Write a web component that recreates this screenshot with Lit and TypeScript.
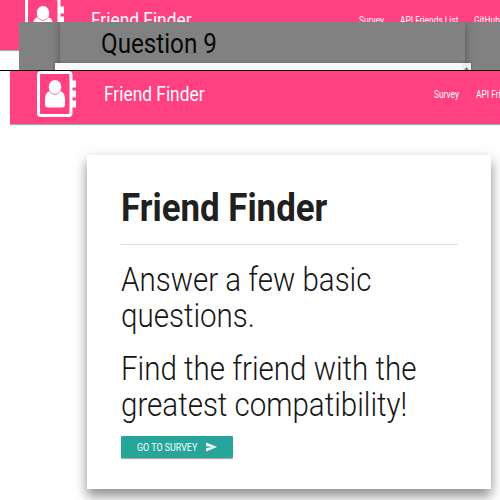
import { LitElement, html, css } from "lit";
import { customElement, property } from "lit/decorators.js";

/** Horizontally condensed Roboto label. */
@customElement("slim-text")
class SlimText extends LitElement {
  @property({ type: Number }) ratio = 0.83;
  static styles = css`
    :host { display: block; white-space: nowrap; }
    .label { display: inline-block; transform-origin: 0 50%; }
  `;
  render() {
    return html`<span class="label" style="transform:scaleX(${this.ratio})"><slot></slot></span>`;
  }
}

@customElement("nav-bar")
class NavBar extends LitElement {
  static styles = css`
    :host {
      display: flex; box-sizing: border-box; height: 53px; width: 520px;
      background: #ff4081; color: #fff; flex: none;
      box-shadow: 0 1px 1px rgba(0, 70, 50, 0.4);
    }
    .logo { display: block; width: 39px; height: 47px; margin-left: 27.5px; flex: none; }
    .brand { width: var(--brand-width, 303.5px); margin-left: 27.5px; font-size: 20px; line-height: 47px; flex: none; }
    .links { display: flex; font-size: 10px; line-height: 47px; }
    .survey { width: 41.3px; margin-left: 27px; }
    .api { width: 74.5px; }
  `;
  render() {
    return html`
      <svg class="logo" viewBox="0 0 39 47">
        <rect x="1.5" y="1.5" width="32.5" height="43" rx="2.5" fill="none" stroke="#fff" stroke-width="3" />
        <path fill="#fff" d="M35 9.5h4v7H35zM35 19.5h4v7H35zM35 29.5h4v7H35z" />
        <ellipse cx="18" cy="16" rx="6.3" ry="7" fill="#fff" />
        <path fill="#fff" d="M12.2 20.2C9 21.5 8 25 8 29v4.5Q8 36.5 11 36.5H25Q28 36.5 28 33.5V29C28 25 27 21.5 23.8 20.2Q18 27.5 12.2 20.2Z" />
      </svg>
      <slim-text class="brand" ratio="0.867">Friend Finder</slim-text>
      <div class="links">
        <slim-text class="survey" ratio="0.84">Survey</slim-text>
        <slim-text class="api" ratio="0.84">API Friends List</slim-text>
        <slim-text ratio="0.84">GitHub</slim-text>
      </div>
    `;
  }
}

@customElement("app-root")
class AppRoot extends LitElement {
  static styles = css`
    :host {
      display: flex; flex-direction: column; width: 500px; height: 500px; overflow: hidden;
      background: #fff; font-family: Roboto, "Liberation Sans", sans-serif; color: #1b1b1b;
    }
    .top { position: relative; height: 70px; flex: none; overflow: hidden; }
    .top nav-bar { margin: -3px 0 0 -3px; --brand-width: 240.5px; }
    .overlay {
      position: absolute; left: 19px; top: 22px; width: 481px; height: 48px;
      background: #818181; overflow: hidden;
    }
    .modal {
      position: relative; width: 405px; height: 80px; margin-left: 41px;
      box-shadow: 0 0 8px rgba(0, 0, 0, 0.35);
    }
    .question { padding: 0 0 0 41px; font-size: 27.5px; line-height: 43px; color: #080808; }
    .panel {
      position: absolute; left: -5px; top: 41px; width: 416px; height: 30px;
      background: #fafafa; box-shadow: 0 0 3px rgba(0, 0, 0, 0.25);
      display: flex; justify-content: flex-end;
    }
    .scroll { display: block; width: 9px; height: 7px; background: #eee; }
    .rule { height: 1px; background: #000; flex: none; }
    .bottom { flex: 1; overflow: hidden; }
    .bottom nav-bar { margin-left: 9.8px; }
    .card {
      box-sizing: border-box; width: 404px; height: 334px; margin: 31px 0 0 87.3px; padding: 29.5px 33.5px 0;
      background: #fff;
      box-shadow: 0 8px 10px rgba(0, 0, 0, 0.3), 0 4px 14px rgba(0, 0, 0, 0.2);
    }
    .title { font-size: 39.5px; font-weight: 700; line-height: 46px; color: #202020; }
    .line { height: 1px; margin: 13.5px 0 16.5px; background: #e0e0e0; }
    .para { font-size: 33.5px; font-weight: 300; line-height: 36.6px; margin-bottom: 16px; color: #151515; }
    .button {
      display: flex; align-items: center; box-sizing: border-box; width: 112.5px; height: 22.5px;
      margin-top: -4px; padding-left: 16.5px; border-radius: 1px; color: #fff; background: #26a69a;
      box-shadow: 0 1px 1px rgba(70, 0, 0, 0.4);
      font-size: 10px;
    }
    .go { width: 68.5px; }
    .send { display: block; width: 11px; height: 10px; }
  `;
  render() {
    return html`
      <section class="top">
        <nav-bar></nav-bar>
        <div class="overlay">
          <div class="modal">
            <slim-text class="question" ratio="0.88">Question 9</slim-text>
            <div class="panel">
              <svg class="scroll" viewBox="0 0 9 7"><path fill="#777" d="M2.2 7L4.5 4 6.8 7z" /></svg>
            </div>
          </div>
        </div>
      </section>
      <div class="rule"></div>
      <section class="bottom">
        <nav-bar></nav-bar>
        <main class="card">
          <slim-text class="title" ratio="0.882">Friend Finder</slim-text>
          <div class="line"></div>
          <div class="para">
            <slim-text ratio="0.881">Answer a few basic</slim-text>
            <slim-text ratio="0.881">questions.</slim-text>
          </div>
          <div class="para">
            <slim-text ratio="0.881">Find the friend with the</slim-text>
            <slim-text ratio="0.881">greatest compatibility!</slim-text>
          </div>
          <div class="button">
            <slim-text class="go" ratio="0.89">GO TO SURVEY</slim-text>
            <svg class="send" viewBox="0 0 11 10"><path fill="#fff" d="M0 .5L11 5 0 9.5V6L7 5 0 4z" /></svg>
          </div>
        </main>
      </section>
    `;
  }
}
